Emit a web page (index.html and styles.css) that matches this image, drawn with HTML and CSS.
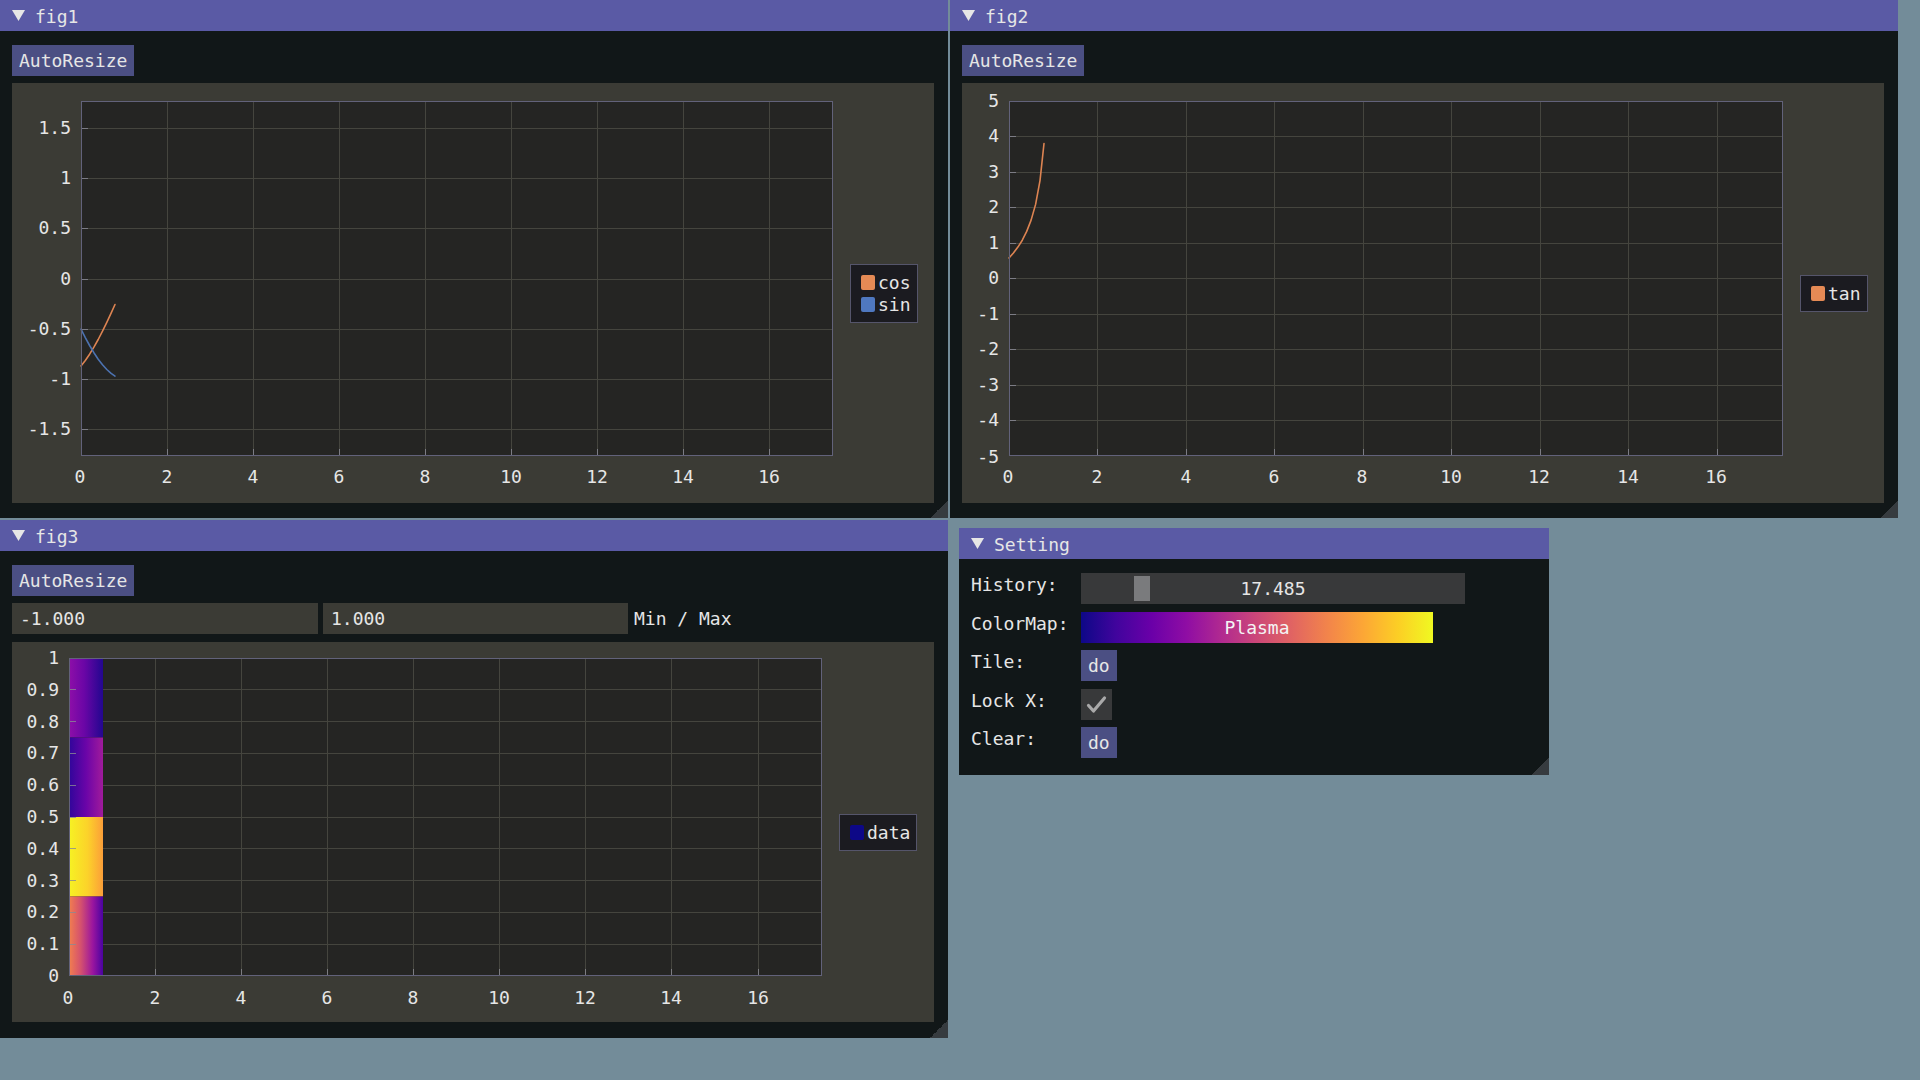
FILE: index.html
```html
<!DOCTYPE html>
<html>
<head>
<meta charset="utf-8">
<title>ImPlot demo</title>
<link rel="stylesheet" href="styles.css">
</head>
<body>

<section class="win win-fig1">
  <header class="title"><svg class="tri" viewBox="0 0 13 11"><path d="M0 0H13L6.5 11Z"/></svg><span>fig1</span></header>
  <div class="body">
    <div class="btn">AutoResize</div>
    <div class="frame frame-420">
      <svg class="plot" width="821" height="420" viewBox="0 0 821 420">
        <rect class="pbg" x="69" y="18" width="752" height="355"/>
        <path class="grid" d="M155.5 18V373M241.5 18V373M327.5 18V373M413.5 18V373M499.5 18V373M585.5 18V373M671.5 18V373M757.5 18V373M69 45.5H821M69 95.5H821M69 145.5H821M69 196.5H821M69 246.5H821M69 296.5H821M69 346.5H821"/>
        <path class="tick" d="M69 45.5H76M69 95.5H76M69 145.5H76M69 196.5H76M69 246.5H76M69 296.5H76M69 346.5H76M155.5 366V373M241.5 366V373M327.5 366V373M413.5 366V373M499.5 366V373M585.5 366V373M671.5 366V373M757.5 366V373"/>
        <polyline class="ln ln-orange" points="69,282.9 73.3,277.5 77.6,271.2 81.9,264.2 86.2,256.5 90.5,248.2 94.8,239.4 99.1,230.2 103,221.5"/>
        <polyline class="ln ln-blue" points="69,246.2 73.3,254.6 77.6,262.5 81.9,269.7 86.2,276.2 90.5,281.8 94.8,286.5 99.1,290.4 103,293.1"/>
        <rect class="border" x="69.5" y="18.5" width="751" height="354"/>
        <g class="lbl lbl-y">
          <text x="59" y="50.5">1.5</text>
          <text x="59" y="100.5">1</text>
          <text x="59" y="150.5">0.5</text>
          <text x="59" y="201.5">0</text>
          <text x="59" y="251.5">-0.5</text>
          <text x="59" y="301.5">-1</text>
          <text x="59" y="351.5">-1.5</text>
        </g>
        <g class="lbl lbl-x">
          <text x="68" y="400">0</text>
          <text x="155" y="400">2</text>
          <text x="241" y="400">4</text>
          <text x="327" y="400">6</text>
          <text x="413" y="400">8</text>
          <text x="499" y="400">10</text>
          <text x="585" y="400">12</text>
          <text x="671" y="400">14</text>
          <text x="757" y="400">16</text>
        </g>
      </svg>
      <div class="legend">
        <div class="li"><span class="sw sw-orange"></span><span>cos</span></div>
        <div class="li"><span class="sw sw-blue"></span><span>sin</span></div>
      </div>
    </div>
  </div>
  <div class="grip"></div>
</section>

<section class="win win-fig2">
  <header class="title"><svg class="tri" viewBox="0 0 13 11"><path d="M0 0H13L6.5 11Z"/></svg><span>fig2</span></header>
  <div class="body">
    <div class="btn">AutoResize</div>
    <div class="frame frame-420">
      <svg class="plot" width="821" height="420" viewBox="0 0 821 420">
        <rect class="pbg" x="47" y="18" width="774" height="355"/>
        <path class="grid" d="M135.5 18V373M224.5 18V373M312.5 18V373M401.5 18V373M489.5 18V373M578.5 18V373M666.5 18V373M755.5 18V373M47 53.5H821M47 89.5H821M47 124.5H821M47 160.5H821M47 195.5H821M47 231.5H821M47 266.5H821M47 302.5H821M47 337.5H821"/>
        <path class="tick" d="M47 53.5H54M47 89.5H54M47 124.5H54M47 160.5H54M47 195.5H54M47 231.5H54M47 266.5H54M47 302.5H54M47 337.5H54M135.5 366V373M224.5 366V373M312.5 366V373M401.5 366V373M489.5 366V373M578.5 366V373M666.5 366V373M755.5 366V373"/>
        <polyline class="ln ln-orange" points="47,175 51.4,170 55.9,164.1 60.3,157.2 64.7,148.4 69.1,137.1 73.6,121.4 78,97.6 82,60.5"/>
        <rect class="border" x="47.5" y="18.5" width="773" height="354"/>
        <g class="lbl lbl-y">
          <text x="37" y="23.5">5</text>
          <text x="37" y="59">4</text>
          <text x="37" y="94.5">3</text>
          <text x="37" y="130">2</text>
          <text x="37" y="165.5">1</text>
          <text x="37" y="201">0</text>
          <text x="37" y="236.5">-1</text>
          <text x="37" y="272">-2</text>
          <text x="37" y="307.5">-3</text>
          <text x="37" y="343">-4</text>
          <text x="37" y="379.5">-5</text>
        </g>
        <g class="lbl lbl-x">
          <text x="46" y="400">0</text>
          <text x="135" y="400">2</text>
          <text x="224" y="400">4</text>
          <text x="312" y="400">6</text>
          <text x="400" y="400">8</text>
          <text x="489" y="400">10</text>
          <text x="577" y="400">12</text>
          <text x="666" y="400">14</text>
          <text x="754" y="400">16</text>
        </g>
      </svg>
      <div class="legend">
        <div class="li"><span class="sw sw-orange"></span><span>tan</span></div>
      </div>
    </div>
  </div>
  <div class="grip"></div>
</section>

<section class="win win-fig3">
  <header class="title"><svg class="tri" viewBox="0 0 13 11"><path d="M0 0H13L6.5 11Z"/></svg><span>fig3</span></header>
  <div class="body body-fig3">
    <div class="btn">AutoResize</div>
    <div class="inrow">
      <div class="input input-a">-1.000</div>
      <div class="input input-b">1.000</div>
      <span class="inlabel">Min / Max</span>
    </div>
    <div class="frame frame-380">
      <svg class="plot" width="810" height="380" viewBox="0 0 810 380">
        <defs>
          <linearGradient id="h1" x1="0" x2="1" y1="0" y2="0"><stop offset="0" stop-color="#8e0fa8"/><stop offset="0.45" stop-color="#6a06a6"/><stop offset="1" stop-color="#22078f"/></linearGradient>
          <linearGradient id="h2" x1="0" x2="1" y1="0" y2="0"><stop offset="0" stop-color="#30069a"/><stop offset="0.5" stop-color="#6a04a8"/><stop offset="1" stop-color="#a11b9b"/></linearGradient>
          <linearGradient id="h3" x1="0" x2="1" y1="0" y2="0"><stop offset="0" stop-color="#f6f223"/><stop offset="0.55" stop-color="#fcd22a"/><stop offset="1" stop-color="#fb9e39"/></linearGradient>
          <linearGradient id="h4" x1="0" x2="1" y1="0" y2="0"><stop offset="0" stop-color="#f27f4e"/><stop offset="0.35" stop-color="#d4506f"/><stop offset="0.7" stop-color="#9a159f"/><stop offset="1" stop-color="#4a03a1"/></linearGradient>
        </defs>
        <rect class="pbg" x="57" y="16" width="753" height="318"/>
        <path class="grid" d="M143.5 16V334M229.5 16V334M315.5 16V334M401.5 16V334M487.5 16V334M573.5 16V334M659.5 16V334M746.5 16V334M57 47.5H810M57 79.5H810M57 111.5H810M57 143.5H810M57 175.5H810M57 206.5H810M57 238.5H810M57 270.5H810M57 302.5H810"/>
        <rect x="57" y="16" width="34" height="79.5" fill="url(#h1)"/>
        <rect x="57" y="95.5" width="34" height="79.5" fill="url(#h2)"/>
        <rect x="57" y="175" width="34" height="79.5" fill="url(#h3)"/>
        <rect x="57" y="254.5" width="34" height="79.5" fill="url(#h4)"/>
        <path class="tick tick-soft" d="M57 47.5H64M57 79.5H64M57 111.5H64M57 143.5H64M57 175.5H64M57 206.5H64M57 238.5H64M57 270.5H64M57 302.5H64M143.5 327V334M229.5 327V334M315.5 327V334M401.5 327V334M487.5 327V334M573.5 327V334M659.5 327V334M746.5 327V334"/>
        <rect class="border" x="57.5" y="16.5" width="752" height="317"/>
        <g class="lbl lbl-y">
          <text x="47" y="22">1</text>
          <text x="47" y="53.8">0.9</text>
          <text x="47" y="85.6">0.8</text>
          <text x="47" y="117.4">0.7</text>
          <text x="47" y="149.2">0.6</text>
          <text x="47" y="181">0.5</text>
          <text x="47" y="212.8">0.4</text>
          <text x="47" y="244.6">0.3</text>
          <text x="47" y="276.4">0.2</text>
          <text x="47" y="308.2">0.1</text>
          <text x="47" y="340">0</text>
        </g>
        <g class="lbl lbl-x">
          <text x="56" y="362">0</text>
          <text x="143" y="362">2</text>
          <text x="229" y="362">4</text>
          <text x="315" y="362">6</text>
          <text x="401" y="362">8</text>
          <text x="487" y="362">10</text>
          <text x="573" y="362">12</text>
          <text x="659" y="362">14</text>
          <text x="746" y="362">16</text>
        </g>
      </svg>
      <div class="legend">
        <div class="li"><span class="sw sw-indigo"></span><span>data</span></div>
      </div>
    </div>
  </div>
  <div class="grip"></div>
</section>

<section class="win win-set">
  <header class="title"><svg class="tri" viewBox="0 0 13 11"><path d="M0 0H13L6.5 11Z"/></svg><span>Setting</span></header>
  <div class="body body-set">
    <div class="form">
      <span class="flabel">History:</span>
      <div class="slider"><span class="grab"></span><span class="sval">17.485</span></div>
      <span class="flabel">ColorMap:</span>
      <div class="cmap">Plasma</div>
      <span class="flabel">Tile:</span>
      <div class="btn">do</div>
      <span class="flabel">Lock X:</span>
      <div class="check"><svg viewBox="0 0 31 31" width="31" height="31"><path d="M7.5 16.5L12.5 22L23.5 9"/></svg></div>
      <span class="flabel">Clear:</span>
      <div class="btn">do</div>
    </div>
  </div>
  <div class="grip"></div>
</section>

</body>
</html>
```

FILE: styles.css
```css
* {
  box-sizing: border-box;
  margin: 0;
  padding: 0;
}

html,
body {
  width: 1920px;
  height: 1080px;
  overflow: hidden;
}

body {
  position: relative;
  background: rgb(115, 140, 153);
  font-family: "DejaVu Sans Mono", "Liberation Mono", monospace;
  font-size: 18px;
  line-height: 31px;
  color: #e6e6e6;
}

/* windows on the desktop */
.win {
  position: absolute;
  display: flex;
  flex-direction: column;
  background: #111718;
}

.win-fig1 { left: 0; top: 0; width: 948px; height: 518px; }
.win-fig2 { left: 950px; top: 0; width: 948px; height: 518px; }
.win-fig3 { left: 0; top: 520px; width: 948px; height: 518px; }
.win-set  { left: 959px; top: 528px; width: 590px; height: 247px; }

.title {
  flex: none;
  height: 31px;
  display: flex;
  align-items: center;
  gap: 10px;
  padding-left: 12px;
  background: #5a5aa5;
  white-space: nowrap;
}

.title span {
  padding-top: 2px;
}

.tri {
  width: 13px;
  height: 11px;
  fill: #e6e6e6;
  flex: none;
}

.body {
  display: flex;
  flex-direction: column;
  align-items: flex-start;
  gap: 7px;
  padding: 14px 14px 15px 12px;
}

.body-fig3 {
  padding-top: 14px;
}

.btn {
  height: 31px;
  line-height: 31px;
  padding: 0 7px;
  background: #4b4f83;
  white-space: nowrap;
}

/* plot frames */
.frame {
  flex: none;
  width: 922px;
  display: flex;
  align-items: center;
  background: #3b3b35;
}

.frame-420 { height: 420px; }
.frame-380 { height: 380px; margin-top: 1px; }

.plot {
  flex: none;
  display: block;
}

.pbg { fill: #252523; }
.grid { fill: none; stroke: #45453e; stroke-width: 1; }
.tick { fill: none; stroke: #7c7c84; stroke-width: 1; }
.tick-soft { stroke: #8a8a92; opacity: 0.8; }
.border { fill: none; stroke: #62627a; stroke-width: 1; }

.ln {
  fill: none;
  stroke-width: 1.6;
  stroke-linejoin: round;
  stroke-linecap: round;
}
.ln-orange { stroke: #dd8452; }
.ln-blue { stroke: #4c72b0; }

.lbl {
  fill: #e6e6e6;
  font-family: "DejaVu Sans Mono", "Liberation Mono", monospace;
  font-size: 18px;
}
.lbl-y { text-anchor: end; }
.lbl-x { text-anchor: middle; }

.legend {
  flex: none;
  margin-left: 17px;
  display: flex;
  flex-direction: column;
  gap: 7px;
  padding: 10px 6px 10px 10px;
  background: #1b1b20;
  border: 1px solid #55556b;
}

.li {
  display: flex;
  align-items: center;
  gap: 3px;
  height: 15px;
  line-height: 15px;
  white-space: nowrap;
}

.sw {
  flex: none;
  width: 14px;
  height: 15px;
  border-radius: 2px;
}
.sw-orange { background: #e58a55; }
.sw-blue { background: #4f78c0; }
.sw-indigo { background: #0d0887; }

/* fig3 min / max inputs */
.inrow {
  display: flex;
  align-items: center;
  gap: 5px;
}

.input {
  height: 31px;
  line-height: 31px;
  padding-left: 8px;
  background: #3b3b35;
  white-space: nowrap;
}
.input-a { width: 306px; }
.input-b { width: 305px; }
.inlabel { margin-left: 1px; white-space: nowrap; }

/* setting window */
.body-set {
  padding-top: 14px;
}

.form {
  display: grid;
  grid-template-columns: 110px auto;
  row-gap: 7.5px;
  justify-items: start;
  align-items: start;
}

.flabel {
  line-height: 23px;
  white-space: nowrap;
}

.slider {
  display: grid;
  width: 384px;
  height: 31px;
  background: #38393a;
}

.grab {
  grid-area: 1 / 1;
  justify-self: start;
  width: 16px;
  height: 25px;
  margin: 3px 0 0 53px;
  background: #7a7b7d;
}

.sval {
  grid-area: 1 / 1;
  justify-self: center;
  line-height: 31px;
}

.cmap {
  width: 352px;
  height: 31px;
  line-height: 31px;
  text-align: center;
  color: #f4f4f4;
  background: linear-gradient(to right,
    #0d0887 0%, #41049d 10%, #6a00a8 20%, #8f0da4 30%, #b12a90 40%,
    #cc4778 50%, #e16462 60%, #f2844b 70%, #fca636 80%, #fcce25 90%, #f0f921 100%);
}

.check {
  width: 31px;
  height: 31px;
  background: #38393a;
}

.check svg {
  display: block;
  fill: none;
  stroke: #a9a9a9;
  stroke-width: 3.2;
  stroke-linecap: round;
  stroke-linejoin: round;
}

/* window resize grip overlays the corner */
.grip {
  position: absolute;
  right: 0;
  bottom: 0;
  width: 18px;
  height: 18px;
  background: linear-gradient(to bottom right, transparent 50%, #363b3f 50%);
}
```
